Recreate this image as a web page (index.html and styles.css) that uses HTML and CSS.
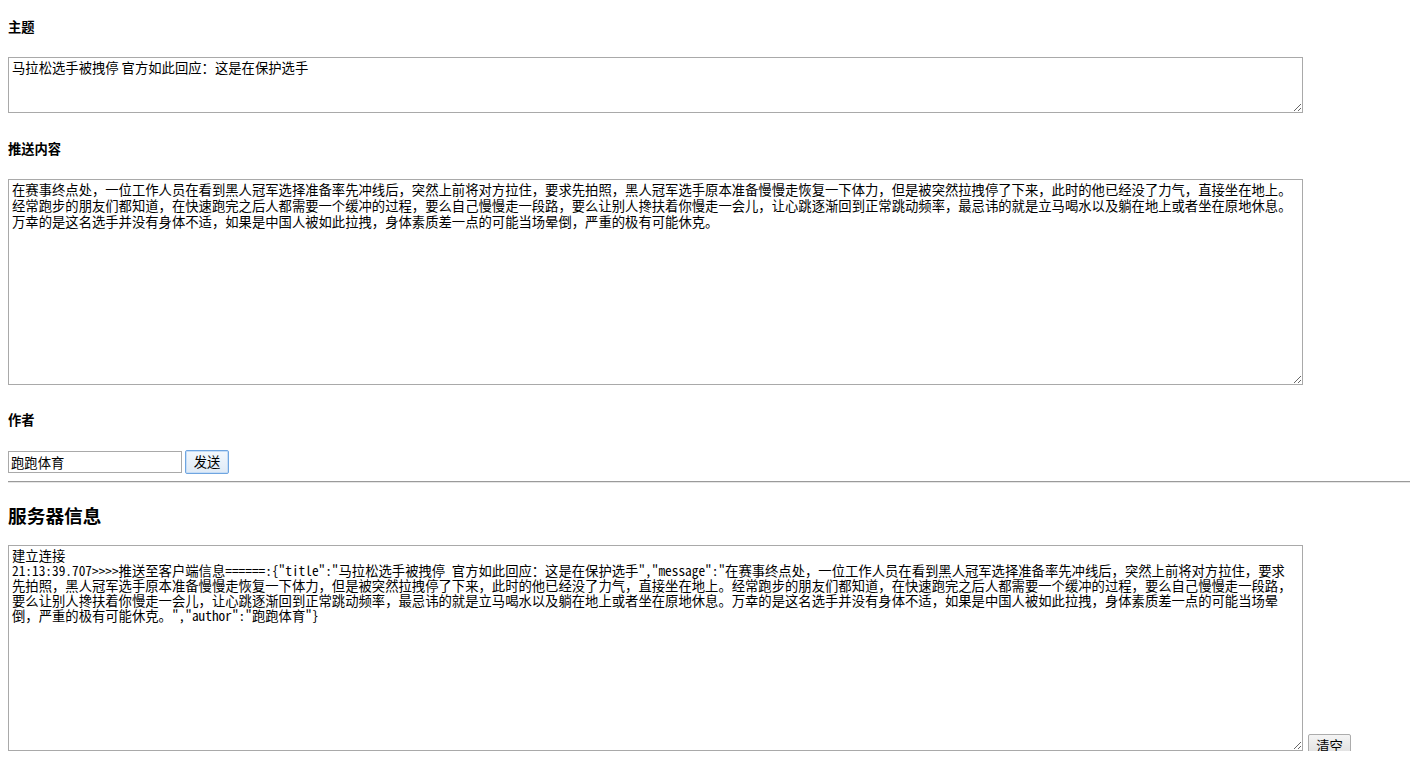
FILE: index.html
```html
<!DOCTYPE html>
<html lang="zh-CN">
<head>
<meta charset="utf-8">
<title>推送</title>
<link rel="stylesheet" href="styles.css">
</head>
<body>
<div class="page">
  <h5 class="label">主题</h5>
  <textarea class="box box-title">马拉松选手被拽停 官方如此回应：这是在保护选手</textarea>
  <h5 class="label">推送内容</h5>
  <textarea class="box box-content">在赛事终点处，一位工作人员在看到黑人冠军选择准备率先冲线后，突然上前将对方拉住，要求先拍照，黑人冠军选手原本准备慢慢走恢复一下体力，但是被突然拉拽停了下来，此时的他已经没了力气，直接坐在地上。经常跑步的朋友们都知道，在快速跑完之后人都需要一个缓冲的过程，要么自己慢慢走一段路，要么让别人搀扶着你慢走一会儿，让心跳逐渐回到正常跳动频率，最忌讳的就是立马喝水以及躺在地上或者坐在原地休息。万幸的是这名选手并没有身体不适，如果是中国人被如此拉拽，身体素质差一点的可能当场晕倒，严重的极有可能休克。</textarea>
  <h5 class="label">作者</h5>
  <div class="send-row">
    <input class="author" type="text" value="跑跑体育">
    <button class="btn btn-focus" type="button">发送</button>
  </div>
  <hr class="divider">
  <h3 class="section-title">服务器信息</h3>
  <div class="log-row">
    <textarea class="box box-log">建立连接
21:13:39.707&gt;&gt;&gt;&gt;推送至客户端信息======:{"title":"马拉松选手被拽停 官方如此回应：这是在保护选手","message":"在赛事终点处，一位工作人员在看到黑人冠军选择准备率先冲线后，突然上前将对方拉住，要求先拍照，黑人冠军选手原本准备慢慢走恢复一下体力，但是被突然拉拽停了下来，此时的他已经没了力气，直接坐在地上。经常跑步的朋友们都知道，在快速跑完之后人都需要一个缓冲的过程，要么自己慢慢走一段路，要么让别人搀扶着你慢走一会儿，让心跳逐渐回到正常跳动频率，最忌讳的就是立马喝水以及躺在地上或者坐在原地休息。万幸的是这名选手并没有身体不适，如果是中国人被如此拉拽，身体素质差一点的可能当场晕倒，严重的极有可能休克。","author":"跑跑体育"}</textarea>
    <button class="btn btn-clear" type="button">清空</button>
  </div>
</div>
</body>
</html>
```

FILE: styles.css
```css
html, body {
  margin: 0;
  padding: 0;
  background: #ffffff;
}

body {
  font-family: "Noto Sans CJK SC", "Noto Sans", sans-serif;
  color: #000000;
}

.page {
  padding: 19px 0 0 8px;
}

.label {
  margin: 0 0 22px 0;
  font-size: 13.28px;
  line-height: 16px;
  height: 16px;
  font-weight: bold;
}

.box {
  display: block;
  box-sizing: border-box;
  width: 1295px;
  margin: 0;
  padding: 2px 3px;
  border: 1px solid #a9a9a9;
  border-radius: 0;
  font-family: "Noto Sans CJK SC", sans-serif;
  font-size: 13.33px;
  line-height: 16px;
  color: #000000;
  background: #ffffff;
  resize: both;
  overflow: hidden;
  outline: none;
}

.box-title {
  height: 56px;
  margin-bottom: 28px;
}

.box-content {
  height: 206px;
  margin-bottom: 27px;
}

.box-log {
  height: 206px;
  padding-right: 7px;
  line-height: 15px;
  font-family: "Noto Sans Mono CJK SC", "Noto Sans CJK SC", monospace;
}

.send-row {
  display: flex;
  align-items: center;
  gap: 3px;
  height: 24px;
}

.author {
  box-sizing: border-box;
  width: 174px;
  height: 22px;
  margin: 0;
  padding: 0 2px;
  border: 1px solid #a9a9a9;
  font-family: "Noto Sans CJK SC", sans-serif;
  font-size: 13.33px;
  color: #000000;
  outline: none;
}

.btn {
  box-sizing: border-box;
  width: 44px;
  height: 24px;
  margin: 0;
  padding: 0;
  border: 1px solid #acacac;
  border-radius: 2px;
  background: linear-gradient(#f4f4f4, #dedede);
  font-family: "Noto Sans CJK SC", sans-serif;
  font-size: 13.33px;
  line-height: 20px;
  color: #000000;
}

.btn-focus {
  border-color: #6fa5e0;
  background: linear-gradient(#f3f8fd, #dfeaf6);
  box-shadow: inset 0 0 0 1px #c6ddf6;
}

.divider {
  height: 0;
  margin: 7px 0 0 0;
  border: 0;
  border-top: 1px solid #9a9a9a;
  border-bottom: 1px solid #e6e6e6;
}

.section-title {
  margin: 21px 0 19px 0;
  font-size: 18.72px;
  line-height: 22px;
  height: 22px;
  font-weight: bold;
}

.log-row {
  display: flex;
  align-items: flex-end;
  gap: 5px;
}

.btn-clear {
  width: 43px;
  height: 23px;
  margin-bottom: -6px;
}
```
